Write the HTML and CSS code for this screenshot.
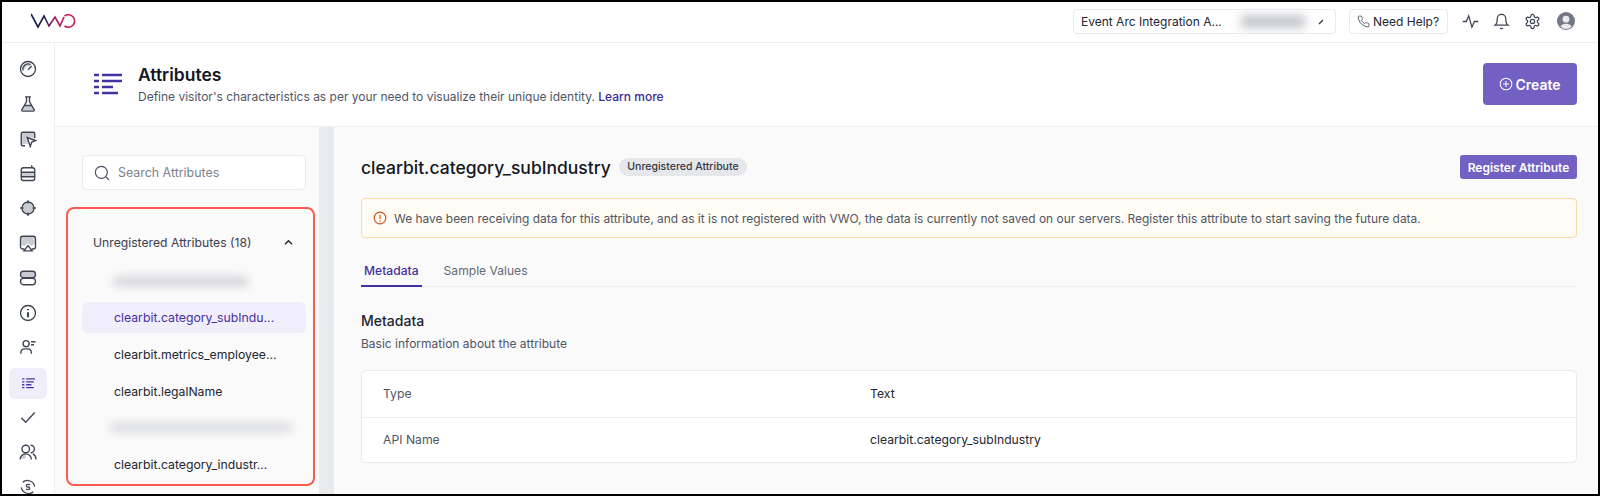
FILE: index.html
```html
<!DOCTYPE html>
<html lang="en">
<head>
<meta charset="utf-8">
<title>Attributes</title>
<link rel="stylesheet" href="styles.css">
</head>
<body>
<div class="frame">
  <header class="topbar">
    <svg class="logo" viewBox="0 0 46 16" fill="none" stroke-width="1.600"><defs><linearGradient id="lg" x1="0" x2="1" y1="0" y2="0"><stop offset="0" stop-color="#141a4c"/><stop offset="0.4" stop-color="#1c1f4f"/><stop offset="0.7" stop-color="#9a1a60"/><stop offset="1" stop-color="#c8185f"/></linearGradient></defs><path d="M0 1l7 13 6-11 5 10 6-9 5 9 4-9" stroke="url(#lg)"/><path d="M33.500 3a6.300 6.300 0 1 1 0 10" stroke="#c8185f"/></svg>
    <div class="top-actions">
      <div class="select"><span class="select-text">Event Arc Integration A...</span><span class="blur blur-select"></span><svg class="tick" viewBox="0 0 6 6"><path d="M1 5l4-4" stroke="#333" stroke-width="1.200"/></svg></div>
      <div class="help"><svg class="i13" viewBox="0 0 24 24" fill="none" stroke="#555c6b" stroke-width="1.800"><path d="M22 16.920v3a2 2 0 0 1-2.180 2 19.790 19.790 0 0 1-8.630-3.070 19.500 19.500 0 0 1-6-6 19.790 19.790 0 0 1-3.070-8.670A2 2 0 0 1 4.110 2h3a2 2 0 0 1 2 1.720 12.840 12.840 0 0 0 .7 2.810 2 2 0 0 1-.45 2.110L8.090 9.910a16 16 0 0 0 6 6l1.270-1.270a2 2 0 0 1 2.110-.45 12.840 12.840 0 0 0 2.810.7A2 2 0 0 1 22 16.920z"/></svg><span>Need Help?</span></div>
      <svg class="ti" viewBox="0 0 24 24" fill="none" stroke="#3f4554" stroke-width="1.800"><path d="M1 12h5l3.500-8 4.500 16 3.500-8h5.500"/></svg>
      <svg class="ti" viewBox="0 0 24 24" fill="none" stroke="#3f4554" stroke-width="1.800"><path d="M18 8A6 6 0 0 0 6 8c0 7-3 9-3 9h18s-3-2-3-9M13.730 21a2 2 0 0 1-3.460 0"/></svg>
      <svg class="ti" viewBox="0 0 24 24" fill="none" stroke="#3f4554" stroke-width="1.800"><circle cx="12" cy="12" r="3"/><path d="M12.220 2h-.44a2 2 0 0 0-2 2v.18a2 2 0 0 1-1 1.730l-.43.25a2 2 0 0 1-2 0l-.15-.08a2 2 0 0 0-2.730.73l-.22.38a2 2 0 0 0 .73 2.730l.15.1a2 2 0 0 1 1 1.720v.51a2 2 0 0 1-1 1.740l-.15.09a2 2 0 0 0-.73 2.730l.22.38a2 2 0 0 0 2.730.73l.15-.08a2 2 0 0 1 2 0l.43.25a2 2 0 0 1 1 1.730V20a2 2 0 0 0 2 2h.44a2 2 0 0 0 2-2v-.18a2 2 0 0 1 1-1.730l.43-.25a2 2 0 0 1 2 0l.15.08a2 2 0 0 0 2.730-.73l.22-.39a2 2 0 0 0-.73-2.730l-.15-.08a2 2 0 0 1-1-1.740v-.5a2 2 0 0 1 1-1.740l.15-.09a2 2 0 0 0 .73-2.730l-.22-.38a2 2 0 0 0-2.730-.73l-.15.08a2 2 0 0 1-2 0l-.43-.25a2 2 0 0 1-1-1.730V4a2 2 0 0 0-2-2z"/></svg>
      <svg class="avatar" viewBox="0 0 20 20"><circle cx="10" cy="10" r="10" fill="#737885"/><circle cx="10" cy="8" r="3.800" fill="#e8e9ec"/><path d="M3.800 16.500a6.500 5 0 0 1 12.400 0a9 9 0 0 1-12.400 0z" fill="#e8e9ec"/></svg>
    </div>
  </header>
  <div class="shell">
    <nav class="rail">
      <svg class="ni" viewBox="0 0 24 24"><circle cx="12" cy="12" r="10"/><path class="g" d="M12 5a7 7 0 0 0-7 7h3a4 4 0 0 1 6-3.500l2-2.500a7 7 0 0 0-4-1z"/><path d="M5.500 14a7 7 0 0 1 10-8M12 13l5-5"/></svg>
      <svg class="ni" viewBox="0 0 24 24"><path class="g" d="M7 14h10l4 7H3z"/><path d="M8 2.500h8M10 2.500V9l-6 10a1.500 1.500 0 0 0 1 2.500h14a1.500 1.500 0 0 0 1-2.500L14 9V2.500M7 14h10"/></svg>
      <svg class="ni" viewBox="0 0 24 24"><path class="g" d="M4 4h16v7l-9-2 2 9-9 1z"/><path d="M8 21H5a2 2 0 0 1-2-2V5a2 2 0 0 1 2-2h14a2 2 0 0 1 2 2v6M11 10l11 4-5 2-2 6z"/></svg>
      <svg class="ni" viewBox="0 0 24 24"><path class="g" d="M3 12h18v5H3z"/><rect x="3" y="5" width="18" height="17" rx="3"/><path d="M3 11h18M3 17h18M17 1.500V5"/></svg>
      <svg class="ni" viewBox="0 0 24 24"><circle class="g" cx="12" cy="12" r="7"/><circle cx="12" cy="12" r="8"/><path d="M12 1.500V6M12 18v4.500M1.500 12H6M18 12h4.500"/></svg>
      <svg class="ni" viewBox="0 0 24 24"><path class="g" d="M3 4h18v9l-5 3-4-4-5 4-4-1z"/><path d="M7 20H5a3 3 0 0 1-3-3V6a3 3 0 0 1 3-3h14a3 3 0 0 1 3 3v11a3 3 0 0 1-3 3h-2M6.500 22.500l5.500-7 5.500 7z"/></svg>
      <svg class="ni" viewBox="0 0 24 24"><rect class="g" x="2" y="3" width="20" height="8.500" rx="4"/><rect x="2" y="3" width="20" height="8.500" rx="4"/><rect x="2" y="12.500" width="20" height="8.500" rx="4"/></svg>
      <svg class="ni" viewBox="0 0 24 24"><circle cx="12" cy="12" r="10"/><path class="thick" d="M12 11v6.500M12 6.500v1.800"/></svg>
      <svg class="ni" viewBox="0 0 24 24"><circle cx="9.500" cy="7.500" r="4"/><path d="M2.500 21v-2a5 5 0 0 1 5-4.500h4a5 5 0 0 1 5 4.500v2M16 5h6M16 9h4"/></svg>
      <div class="rail-active"><svg class="list-small" viewBox="0 0 24 24"><path d="M1 5h4M8 5h15M1 10h4M8 10h13M1 15h4M8 15h9M1 20h4M8 20h13"/></svg></div>
      <svg class="ni" viewBox="0 0 24 24"><path d="M3 13l6 6L21 6"/></svg>
      <svg class="ni" viewBox="0 0 24 24"><path class="g" d="M2 21a7 7 0 0 1 7-8v8z"/><circle cx="9" cy="8" r="5"/><path d="M1.500 22a7.500 7.500 0 0 1 15 0M15.500 3a5 5 0 0 1 0 10M18.500 14.500a7.500 7.500 0 0 1 4 7.500"/></svg>
      <svg class="ni coin" viewBox="0 0 24 24"><path d="M5 5.500a10 10 0 0 1 16 6M19 18.500a10 10 0 0 1-16-6M14.500 9.500a2.500 2 0 0 0-2.500-1c-3 0-3 3.500 0 3.500s3 3.500 0 3.500a2.500 2 0 0 1-2.500-1"/></svg>
    </nav>
    <div class="page">
      <section class="page-head">
        <svg class="head-icon" viewBox="0 0 28 22"><path d="M0 2h5M8 2h20M0 8h5M8 8h20M0 14h5M8 14h11M0 20h5M8 20h16"/></svg>
        <div class="head-text">
          <h1>Attributes</h1>
          <p>Define visitor's characteristics as per your need to visualize their unique identity. <a>Learn more</a></p>
        </div>
        <button class="create"><svg class="i14" viewBox="0 0 24 24" fill="none" stroke="#fff" stroke-width="1.800"><circle cx="12" cy="12" r="10"/><path d="M12 7v10M7 12h10"/></svg>Create</button>
      </section>
      <div class="split">
        <aside class="side">
          <div class="search"><svg class="search-icon" viewBox="0 0 24 24" fill="none" stroke="#4b5160" stroke-width="1.700"><circle cx="11" cy="11" r="9"/><path d="M17.500 17.500l5 5"/></svg><span>Search Attributes</span></div>
          <div class="highlight">
            <div class="group"><span>Unregistered Attributes (18)</span><svg class="chev" viewBox="0 0 12 8" fill="none" stroke="#222" stroke-width="1.500"><path d="M2 6l4-4 4 4"/></svg></div>
            <div class="item"><span class="blur blur-a"></span></div>
            <div class="item active">clearbit.category_subIndu...</div>
            <div class="item">clearbit.metrics_employee...</div>
            <div class="item">clearbit.legalName</div>
            <div class="item"><span class="blur blur-b"></span></div>
            <div class="item">clearbit.category_industr...</div>
          </div>
        </aside>
        <div class="divider"></div>
        <main class="detail">
          <div class="detail-head">
            <h2>clearbit.category_subIndustry</h2>
            <span class="badge">Unregistered Attribute</span>
            <button class="register">Register Attribute</button>
          </div>
          <div class="alert"><svg class="i14" viewBox="0 0 24 24" fill="none" stroke="#c8541c" stroke-width="2"><circle cx="12" cy="12" r="10"/><path d="M12 6.500v7M12 16v1.800"/></svg><span>We have been receiving data for this attribute, and as it is not registered with VWO, the data is currently not saved on our servers. Register this attribute to start saving the future data.</span></div>
          <div class="tabs"><span class="tab on">Metadata</span><span class="tab">Sample Values</span></div>
          <h3>Metadata</h3>
          <p class="sub">Basic information about the attribute</p>
          <div class="table">
            <div class="row"><span class="key">Type</span><span class="val">Text</span></div>
            <div class="row"><span class="key">API Name</span><span class="val">clearbit.category_subIndustry</span></div>
          </div>
        </main>
      </div>
    </div>
  </div>
</div>
</body>
</html>
```
FILE: styles.css
```css
* { box-sizing: border-box; }
html, body { margin: 0; height: 496px; overflow: hidden; }
body { font-family: Inter, "Liberation Sans", sans-serif; color: #1f2430; background: #fff; }
svg { flex: none; display: block; }
.frame { height: 496px; border: 2px solid #000; display: flex; flex-direction: column; overflow: hidden; background: #fff; }
.topbar { height: 41px; flex: none; display: flex; align-items: center; justify-content: space-between; padding: 0 23px 2px 29px; border-bottom: 1px solid #eeeff2; }
.logo { width: 46px; height: 16px; }
.top-actions { display: flex; align-items: center; }
.select { width: 263px; height: 25px; border: 1px solid #e9eaee; border-radius: 4px; display: flex; align-items: center; padding-left: 7px; font-size: 12px; color: #23262f; position: relative; margin-right: 13px; }
.select-text { white-space: nowrap; }
.blur { display: block; background: #c6c8cc; filter: blur(5px); }
.blur-select { width: 64px; height: 13px; margin-left: 19px; }
.tick { width: 6px; height: 6px; position: absolute; right: 11px; top: 9px; }
.help { width: 99px; height: 25px; border: 1px solid #e9eaee; border-radius: 4px; display: flex; align-items: center; padding-left: 7px; gap: 3px; font-size: 12px; color: #23262f; margin-right: 14px; }
.i13 { width: 13px; height: 13px; }
.i14 { width: 14px; height: 14px; }
.ti { width: 17px; height: 17px; margin-right: 14px; }
.avatar { width: 18px; height: 18px; margin-left: 2px; }
.shell { flex: 1; display: flex; min-height: 0; }
.rail { width: 53px; flex: none; border-right: 1px solid #eeeff2; display: flex; flex-direction: column; align-items: center; padding-top: 17px; overflow: hidden; }
.ni { width: 18px; height: 18px; margin-bottom: 16.800px; fill: none; stroke: #3f4453; stroke-width: 1.800; flex: none; }
.coin { stroke-width: 1.700; }
.g { fill: #c9ccd3; stroke: none; }
.thick { stroke-width: 2.800; }
.rail-active { width: 38px; height: 31px; flex: none; margin: -5.500px 0 9.500px; background: #f1eefc; border-radius: 6px; display: flex; align-items: center; justify-content: center; }
.list-small { width: 15px; height: 14px; fill: none; stroke: #4a35a8; stroke-width: 2.400; }
.page { flex: 1; min-width: 0; display: flex; flex-direction: column; }
.page-head { height: 84px; flex: none; display: flex; align-items: center; padding: 0 21px 0 39px; border-bottom: 1px solid #eeeff2; }
.head-icon { width: 28px; height: 22px; fill: none; stroke: #45309f; stroke-width: 2.600; margin-right: 16px; margin-top: -2px; }
.head-text { flex: 1; }
h1 { margin: 0 0 4px; font-size: 17.500px; line-height: 20px; font-weight: 600; color: #14171f; }
.head-text p { margin: 0; font-size: 12px; line-height: 16px; color: #4f5563; }
.head-text a { color: #3d2a9a; font-weight: 500; }
.create { width: 94px; height: 42px; margin-top: -1px; border: 0; border-radius: 4px; background: #7260c2; color: #fff; font: 600 14px Inter, sans-serif; display: flex; align-items: center; justify-content: center; gap: 2px; padding: 0; }
.split { flex: 1; display: flex; min-height: 0; background: #fafafb; }
.side { width: 264px; flex: none; padding: 28px 12px 0 11px; display: flex; flex-direction: column; }
.search { margin-left: 16px; width: 224px; height: 35px; background: #fff; border: 1px solid #e9eaee; border-radius: 5px; display: flex; align-items: center; padding-left: 11px; gap: 8px; font-size: 12.400px; color: #7d828e; flex: none; }
.search-icon { width: 16px; height: 16px; }
.highlight { margin-top: 17px; width: 249px; height: 279px; border: 2.500px solid #fb5a4c; border-radius: 8px; padding: 16px 7px 0 14px; flex: none; }
.group { height: 34px; display: flex; align-items: center; justify-content: space-between; padding: 0 12px 0 11px; font-size: 12.200px; color: #3b404c; margin-bottom: 6.500px; }
.chev { width: 11px; height: 7px; }
.item { height: 31px; margin-bottom: 5.700px; padding-left: 32px; display: flex; align-items: center; font-size: 12.250px; color: #23262f; border-radius: 6px; white-space: nowrap; }
.item.active { background: #f1eefc; color: #45309f; }
.blur-a { width: 134px; height: 9px; background: #d1d2d5; }
.blur-b { width: 180px; height: 9px; background: #d8d9dc; margin-left: -3px; }
.divider { width: 15px; flex: none; background: #e9eaec; }
.detail { flex: 1; min-width: 0; background: #fafafb; padding: 27px 21px 0 27px; display: flex; flex-direction: column; }
.detail-head { display: flex; align-items: center; height: 26px; flex: none; }
h2 { margin: 0; font-size: 17.500px; font-weight: 500; color: #14171f; }
.badge { margin-left: 8px; height: 18px; padding: 0 8.500px; border-radius: 9px; background: #e6e7ea; font-size: 10.500px; line-height: 18px; font-weight: 500; color: #343946; }
.register { margin-left: auto; width: 117px; height: 24px; border: 0; border-radius: 3px; background: #7260c2; color: #fff; font: 600 12px Inter, sans-serif; padding: 0; }
.alert { height: 40px; flex: none; margin-top: 18px; border: 1px solid #fbd9a5; border-radius: 4px; background: #fffcf6; display: flex; align-items: center; gap: 7px; padding-left: 11px; font-size: 11.950px; color: #50555f; white-space: nowrap; }
.tabs { display: flex; height: 33px; flex: none; margin-top: 16px; border-bottom: 1px solid #eceef1; gap: 19px; font-size: 12.100px; color: #666b78; }
.tab { height: 33px; padding: 0 3px; line-height: 34px; }
.tab.on { color: #45309f; font-weight: 500; border-bottom: 2px solid #45309f; }
h3 { margin: 25px 0 0; font-size: 14px; line-height: 18px; font-weight: 500; color: #1f2430; }
.sub { margin: 6px 0 0; font-size: 12px; line-height: 16px; color: #50555f; }
.table { margin-top: 18px; background: #fff; border: 1px solid #e9eaee; border-radius: 5px; flex: none; }
.row { height: 45.500px; display: flex; align-items: center; padding-left: 21px; font-size: 12.200px; }
.row + .row { border-top: 1px solid #eceef1; }
.key { width: 487px; color: #50555f; }
.val { color: #23262f; }
```
